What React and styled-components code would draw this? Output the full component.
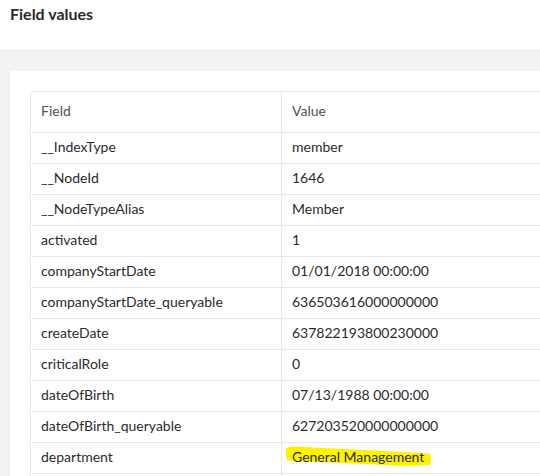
import React from "react";
import styled, { createGlobalStyle } from "styled-components";

const GlobalStyle = createGlobalStyle`
  html, body {
    margin: 0;
    padding: 0;
    background: #f3f3f5;
    overflow: hidden;
    font-family: Lato, "Open Sans", sans-serif;
  }
`;

const rows = [
  ["__IndexType", "member"],
  ["__NodeId", "1646"],
  ["__NodeTypeAlias", "Member"],
  ["activated", "1"],
  ["companyStartDate", "01/01/2018 00:00:00"],
  ["companyStartDate_queryable", "636503616000000000"],
  ["createDate", "637822193800230000"],
  ["criticalRole", "0"],
  ["dateOfBirth", "07/13/1988 00:00:00"],
  ["dateOfBirth_queryable", "627203520000000000"],
  ["department", "General Management", true],
  // next row only peeks in at the bottom edge
  ["", ""],
];

export default function App() {
  return (
    <Page>
      <GlobalStyle />
      <Header>
        <Title>Field values</Title>
      </Header>
      <Main>
        <Card>
          <TableFrame>
            <Table>
              <colgroup>
                <col style={{ width: 250 }} />
                <col />
              </colgroup>
              <thead>
                <tr>
                  <HeadCell>Field</HeadCell>
                  <HeadCell>Value</HeadCell>
                </tr>
              </thead>
              <tbody>
                {rows.map(([field, value, marked], i) => (
                  <tr key={i}>
                    <Cell>{field}</Cell>
                    <Cell>
                      {marked ? (
                        <Marked>
                          <Marker viewBox="0 0 150 26" aria-hidden="true">
                            <path d="M2 5 L8 3.5 L60 6 L120 9 L146 10.5 L147 17 L146 22 L120 23 L60 20 L8 18 L3 17.5 L2 11 Z" />
                          </Marker>
                          <span>{value}</span>
                        </Marked>
                      ) : (
                        value
                      )}
                    </Cell>
                  </tr>
                ))}
              </tbody>
            </Table>
          </TableFrame>
        </Card>
      </Main>
    </Page>
  );
}

const Page = styled.div`
  width: 540px;
  height: 476px;
  overflow: hidden;
  display: flex;
  flex-direction: column;
`;

const Header = styled.header`
  flex-shrink: 0;
  height: 51px;
  box-sizing: border-box;
  background: #fff;
  border-bottom: 1px solid #e9e9eb;
  padding: 3px 10px 0;
`;

const Title = styled.h1`
  margin: 0;
  font-size: 16px;
  line-height: 22px;
  font-weight: 700;
  color: #2a2a2d;
`;

const Main = styled.main`
  flex: 1;
  padding: 20px 0 0 10px;
`;

const Card = styled.div`
  background: #fff;
  border-radius: 3px;
  padding: 20px;
  width: 800px;
  min-height: 600px;
`;

const TableFrame = styled.div`
  border: 1px solid #e9e9eb;
  border-radius: 3px;
  overflow: hidden;
  width: 700px;
`;

const Table = styled.table`
  width: 100%;
  table-layout: fixed;
  border-collapse: separate;
  border-spacing: 0;
  font-size: 14px;
`;

const HeadCell = styled.th`
  box-sizing: border-box;
  height: 40px;
  padding: 0 10px 4px;
  text-align: left;
  font-weight: 400;
  color: #515054;
  & + & {
    border-left: 1px solid #e9e9eb;
  }
`;

const Cell = styled.td`
  box-sizing: border-box;
  height: 31px;
  padding: 0 10px 4px;
  border-top: 1px solid #e9e9eb;
  color: #2b2b2e;
  white-space: nowrap;
  & + & {
    border-left: 1px solid #e9e9eb;
  }
`;

const Marked = styled.span`
  position: relative;
  display: inline-block;
  span {
    position: relative;
  }
`;

const Marker = styled.svg`
  position: absolute;
  left: -8px;
  top: -5px;
  width: 150px;
  height: 26px;
  fill: #fff200;
`;
